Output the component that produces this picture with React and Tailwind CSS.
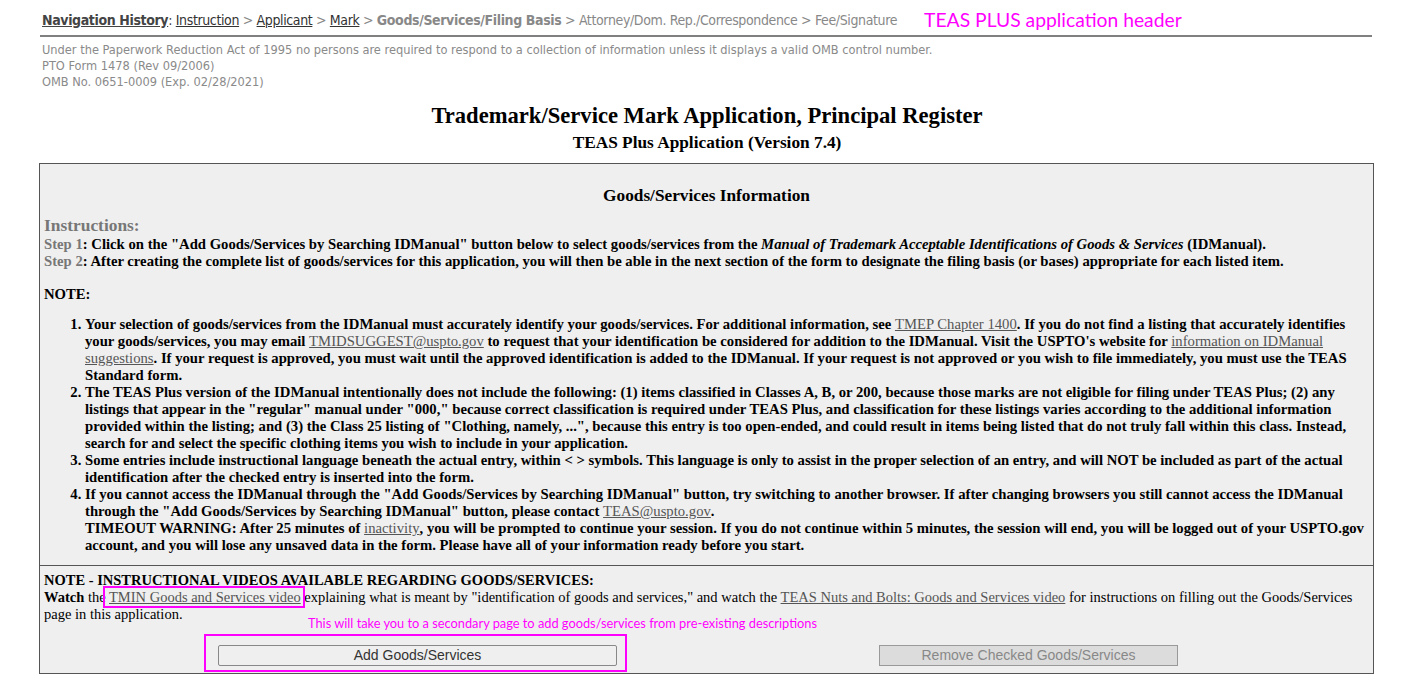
const serif = { fontFamily: '"Liberation Serif", "Times New Roman", serif' };

const NavLink = ({ children }) => (
  <span className="underline text-[#333]">{children}</span>
);

const Sep = () => <span className="text-[#888]"> &gt; </span>;

const Link = ({ children }) => (
  <span className="underline font-normal text-[#555]">{children}</span>
);

const notes = [
  <>
    Your selection of goods/services from the IDManual must accurately identify your goods/services. For additional information, see{" "}
    <Link>TMEP Chapter 1400</Link>. If you do not find a listing that accurately identifies your goods/services, you may email{" "}
    <Link>TMIDSUGGEST@uspto.gov</Link> to request that your identification be considered for addition to the IDManual. Visit the USPTO's website for{" "}
    <Link>information on IDManual suggestions</Link>. If your request is approved, you must wait until the approved identification is added to the IDManual. If your request is not approved or you wish to file immediately, you must use the TEAS Standard form.
  </>,
  <>
    The TEAS Plus version of the IDManual intentionally does not include the following: (1) items classified in Classes A, B, or 200, because those marks are not eligible for filing under TEAS Plus; (2) any listings that appear in the "regular" manual under "000," because correct classification is required under TEAS Plus, and classification for these listings varies according to the additional information provided within the listing; and (3) the Class 25 listing of "Clothing, namely, ...", because this entry is too open-ended, and could result in items being listed that do not truly fall within this class. Instead, search for and select the specific clothing items you wish to include in your application.
  </>,
  <>
    Some entries include instructional language beneath the actual entry, within &lt; &gt; symbols. This language is only to assist in the proper selection of an entry, and will NOT be included as part of the actual identification after the checked entry is inserted into the form.
  </>,
  <>
    If you cannot access the IDManual through the "Add Goods/Services by Searching IDManual" button, try switching to another browser. If after changing browsers you still cannot access the IDManual through the "Add Goods/Services by Searching IDManual" button, please contact{" "}
    <Link>TEAS@uspto.gov</Link>.
    <br />
    TIMEOUT WARNING: After 25 minutes of <Link>inactivity</Link>, you will be prompted to continue your session. If you do not continue within 5 minutes, the session will end, you will be logged out of your USPTO.gov account, and you will lose any unsaved data in the form. Please have all of your information ready before you start.
  </>,
];

export default function App() {
  return (
    <div className="bg-white w-[1414px] h-[680px] overflow-hidden">
      <div className="ml-[40px] w-[1334px]">
        {/* header */}
        <div
          className="flex items-end pt-[8px] pb-[4px] border-b-2 border-[#808080] w-[1332px] text-[14px] tracking-[-0.37px]"
          style={{ fontFamily: '"DejaVu Sans Condensed", Verdana, sans-serif' }}
        >
          <div className="pl-[2px] text-[#888]">
            <span className="font-bold underline text-[#444]">Navigation History</span>
            <span className="text-[#444]">: </span>
            <NavLink>Instruction</NavLink>
            <Sep />
            <NavLink>Applicant</NavLink>
            <Sep />
            <NavLink>Mark</NavLink>
            <Sep />
            <span className="font-bold">Goods/Services/Filing Basis</span>
            <Sep />
            Attorney/Dom. Rep./Correspondence
            <Sep />
            Fee/Signature
          </div>
          <div
            className="ml-[27px] text-[19.3px] text-[#ff00ff] tracking-normal leading-[23px]"
            style={{ fontFamily: 'Lato, "Open Sans", sans-serif' }}
          >
            TEAS PLUS application header
          </div>
        </div>

        <div
          className="pl-[2px] pt-[5px] text-[12.7px] leading-[16px] text-[#8a8a8a]"
          style={{ fontFamily: '"DejaVu Sans Condensed", Verdana, sans-serif' }}
        >
          <div>Under the Paperwork Reduction Act of 1995 no persons are required to respond to a collection of information unless it displays a valid OMB control number.</div>
          <div>PTO Form 1478 (Rev 09/2006)</div>
          <div>OMB No. 0651-0009 (Exp. 02/28/2021)</div>
        </div>

        <div style={serif} className="text-center text-black font-bold">
          <div className="mt-[13px] text-[22.6px] leading-[26px]">Trademark/Service Mark Application, Principal Register</div>
          <div className="mt-[3px] text-[17.3px] leading-[22px]">TEAS Plus Application (Version 7.4)</div>
        </div>

        {/* main box */}
        <div style={serif} className="mt-[9px] border border-[#555] bg-[#efefef] text-black w-[1335px] h-[511px] -ml-[1px] overflow-hidden">
          <div className="px-[4px] pb-[11px]">
            <div className="text-center font-bold text-[17.3px] leading-[20px] pt-[22px]">Goods/Services Information</div>
            <div className="mt-[10px] font-bold text-[17.4px] leading-[18px] text-[#777]">Instructions:</div>
            <div className="mt-[2px] text-[14.7px] leading-[17px] font-bold">
              <div>
                <span className="text-[#777]">Step 1</span>: Click on the "Add Goods/Services by Searching IDManual" button below to select goods/services from the{" "}
                <i>Manual of Trademark Acceptable Identifications of Goods &amp; Services</i> (IDManual).
              </div>
              <div>
                <span className="text-[#777]">Step 2</span>: After creating the complete list of goods/services for this application, you will then be able in the next section of the form to designate the filing basis (or bases) appropriate for each listed item.
              </div>
            </div>
            <div className="mt-[16px] text-[14.7px] leading-[17px] font-bold">NOTE:</div>
            <ol className="mt-[13px] list-decimal pl-[41px] pr-[3px] text-[14.7px] leading-[17px] font-bold">
              {notes.map((n, i) => (
                <li key={i}>{n}</li>
              ))}
            </ol>
          </div>

          <div className="border-t border-[#555] pl-[4px] pr-[2px] pt-[6px] text-[14.5px] leading-[17px]">
            <div className="font-bold">NOTE - INSTRUCTIONAL VIDEOS AVAILABLE REGARDING GOODS/SERVICES:</div>
            <div>
              <b>Watch</b> the{" "}
              <span className="relative">
                <span className="underline text-[#555]">TMIN Goods and Services video</span>
                <span className="absolute -left-[6px] -right-[4px] -top-[3px] -bottom-[3px] border-2 border-[#ff00ff]" />
              </span>{" "}
              explaining what is meant by "identification of goods and services," and watch the{" "}
              <span className="underline text-[#555]">TEAS Nuts and Bolts: Goods and Services video</span> for instructions on filling out the Goods/Services page in this application.
            </div>
            <div
              className="ml-[264px] -mt-[8px] text-[12.8px] leading-[16px] text-[#ff00ff]"
              style={{ fontFamily: 'Lato, "Open Sans", sans-serif' }}
            >
              This will take you to a secondary page to add goods/services from pre-existing descriptions
            </div>
            <div
              className="flex mt-[3px]"
              style={{ fontFamily: '"Liberation Sans", Arial, sans-serif' }}
            >
              <div className="ml-[160px] border-2 border-[#ff00ff] pl-[12px] pr-[8px] pt-[9px] pb-[4px]">
                <button className="block w-[399px] h-[21px] border border-[#888] rounded-[2px] bg-[#efefef] text-[14px] text-[#333] leading-[19px]">
                  Add Goods/Services
                </button>
              </div>
              <div className="ml-[252px] pt-[11px]">
                <button
                  disabled
                  className="block w-[299px] h-[21px] border border-[#999] bg-[#dcdcdc] text-[14px] text-[#888] leading-[19px]"
                >
                  Remove Checked Goods/Services
                </button>
              </div>
            </div>
          </div>
        </div>
      </div>
    </div>
  );
}
